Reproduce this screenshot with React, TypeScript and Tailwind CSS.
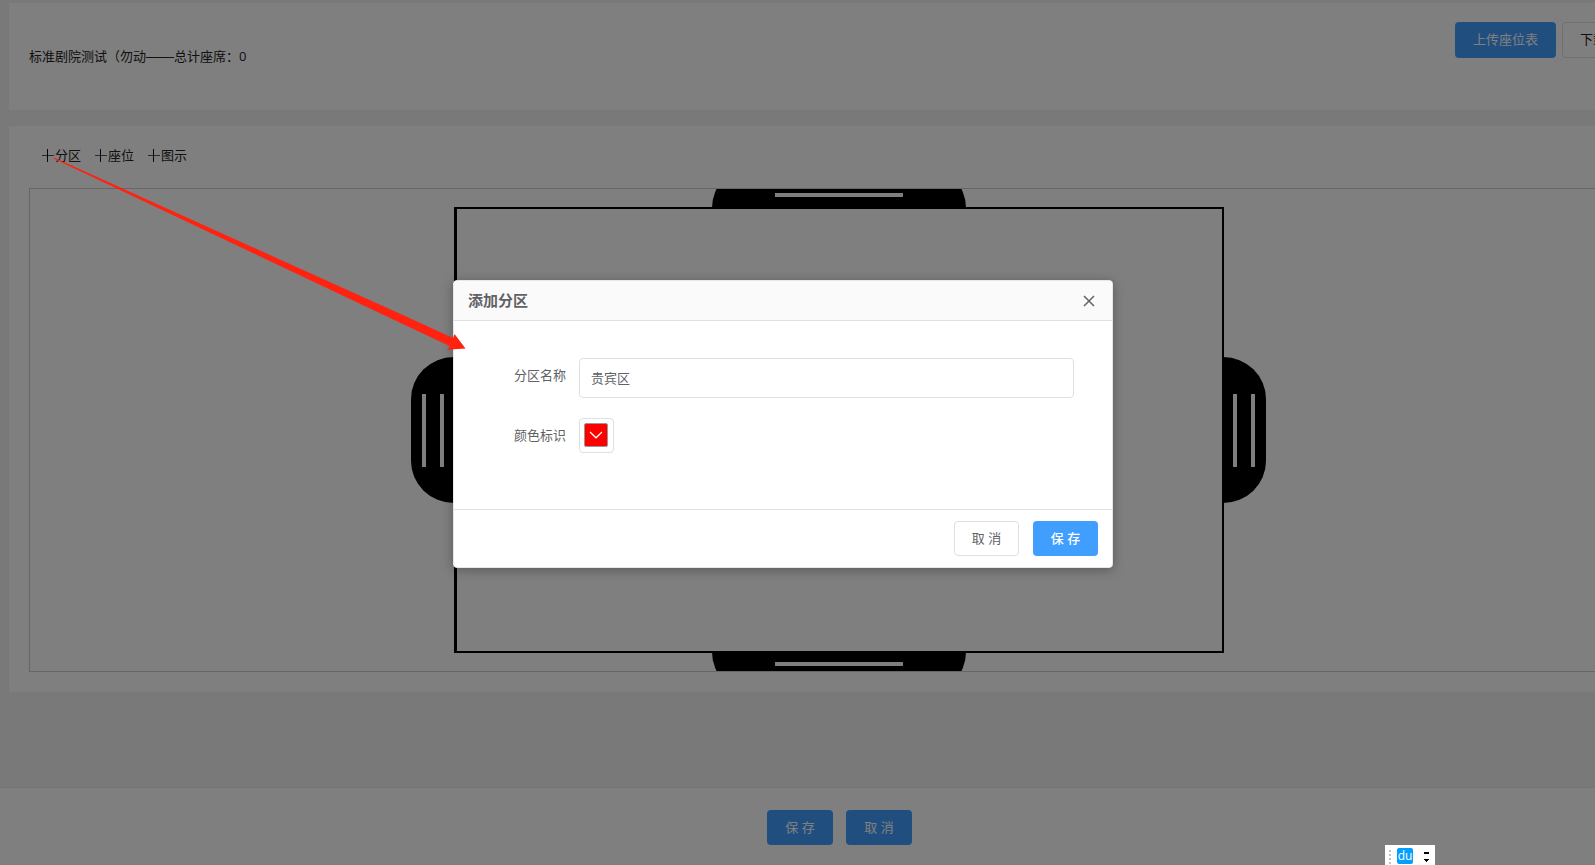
import type { ReactNode } from "react";

function Plus() {
  return (
    <svg viewBox="0 0 13 13" className="h-[13px] w-[13px]" fill="none" shapeRendering="crispEdges">
      <path d="M0.5 6.5H12.5" stroke="#555" />
      <path d="M6.5 0V13" stroke="#111" />
    </svg>
  );
}

function ToolButton({ children }: { children: ReactNode }) {
  return (
    <button type="button" className="flex items-center gap-px whitespace-nowrap leading-[18px]">
      <Plus />
      {children}
    </button>
  );
}

function VenuePlan() {
  return (
    <svg viewBox="411 189 856 482" className="block h-[482px] w-[856px] shrink-0">
      <path d="M454 357A43 42 0 0 0 411 399V461A43 42 0 0 0 454 503Z" fill="#000" />
      <path d="M1223 357A43 42 0 0 1 1266 399V461A43 42 0 0 1 1223 503Z" fill="#000" />
      <path d="M712 208A42 42 0 0 1 754 166H924A42 42 0 0 1 966 208Z" fill="#000" />
      <path d="M712 652A42 42 0 0 0 754 694H924A42 42 0 0 0 966 652Z" fill="#000" />
      <g fill="#fff">
        <path d="M422 394h4v73h-4zM440 394h4v73h-4z" />
        <path d="M1233 394h4v73h-4zM1251 394h4v73h-4z" />
        <path d="M775 193h128v4H775zM775 662h128v4H775z" />
      </g>
      <path d="M454 207H1224V653H454ZM457 209V651H1222V209Z" fill="#000" fillRule="evenodd" />
    </svg>
  );
}

function Arrow() {
  return (
    <svg
      viewBox="0 0 480 360"
      className="pointer-events-none absolute left-0 top-0 z-30 h-[360px] w-[480px]"
      aria-hidden="true"
    >
      <path d="M54 157.4L400 313.8L453 338L454.5 334L465.5 348.6L447.2 349.8L450 346.2L398 321.8L54 158.8Z" fill="#ff2211" />
    </svg>
  );
}

function InputBar() {
  return (
    <div className="absolute bottom-0 right-[160px] z-30 flex h-5 w-[50px] items-start bg-white pt-[3px]">
      <svg viewBox="0 0 12 17" className="h-[17px] w-3" shapeRendering="crispEdges">
        <path d="M4 -2h2v2h-2zM4 2h2v2h-2zM4 6h2v2h-2zM4 10h2v2h-2zM4 14h2v2h-2z" fill="#c4c4c4" />
      </svg>
      <span className="flex h-4 w-4 items-center justify-center rounded-[2px] bg-[#049ffd] text-[12px] leading-4 text-white">
        du
      </span>
      <svg viewBox="0 0 22 17" className="h-[17px] w-[22px]" shapeRendering="crispEdges">
        <path d="M11 4h5v2h-5zM11 11h5v1h-1v1h-1v1h-1v-1h-1v-1h-1z" fill="#000" />
      </svg>
    </div>
  );
}

function Dialog() {
  return (
    <div className="absolute inset-0 z-20 flex items-start justify-center bg-black/50 pr-[29px] pt-[280px]">
      <div
        role="dialog"
        aria-labelledby="dialog-title"
        className="w-[660px] overflow-hidden rounded-[4px] border border-[#e4e7ed] bg-white text-[#606266] shadow-[0_2px_12px_rgba(0,0,0,0.3)]"
      >
        <header className="flex h-10 items-center justify-between border-b border-[#dcdfe6] bg-[#fafafa] pl-[14px] pr-[17px]">
          <h2 id="dialog-title" className="pb-0.5 text-[15px] font-bold leading-5">
            添加分区
          </h2>
          <button type="button" aria-label="关闭" className="flex h-3 w-3 items-center justify-center">
            <svg viewBox="0 0 12 12" className="h-3 w-3" fill="none" stroke="#606266" strokeWidth="1.5">
              <path d="M1 1L11 11M11 1L1 11" />
            </svg>
          </button>
        </header>
        <form className="grid h-[188px] grid-cols-[112px_1fr] content-start gap-x-[13px] gap-y-5 pr-[38px] pt-[37px]">
          <label htmlFor="zone-name" className="text-right leading-[34px]">
            分区名称
          </label>
          <input
            id="zone-name"
            defaultValue="贵宾区"
            className="h-10 w-full rounded-[4px] border border-[#dcdfe6] px-[11px] pb-0.5 outline-none"
          />
          <span id="zone-color" className="text-right leading-[34px]">
            颜色标识
          </span>
          <button
            type="button"
            aria-labelledby="zone-color"
            className="h-[35px] w-[35px] rounded-[4px] border border-[#dcdfe6] pb-[5px] pl-1 pr-[5px] pt-1"
          >
            <span className="flex h-full w-full items-center justify-center rounded-[2px] border border-[#999] bg-[#ff0000]">
              <svg viewBox="0 0 14 8" className="h-2 w-[14px]" fill="none" stroke="#fff" strokeWidth="1.2">
                <path d="M1 1L7 6.8L13 1" />
              </svg>
            </span>
          </button>
        </form>
        <footer className="flex justify-end gap-[14px] border-t border-[#dcdfe6] px-[14px] py-[11px]">
          <button type="button" className="h-[35px] w-[65px] rounded-[4px] border border-[#dcdfe6] bg-white">
            取 消
          </button>
          <button type="button" className="h-[35px] w-[65px] rounded-[4px] bg-[#409eff] font-medium text-white">
            保 存
          </button>
        </footer>
      </div>
    </div>
  );
}

export default function App() {
  return (
    <div className="relative flex min-h-screen flex-col overflow-hidden bg-[#f2f2f2] font-['Open_Sans','Noto_Sans_CJK_SC',sans-serif] text-[13px] text-[#222]">
      <main className="-mr-[74px] flex grow flex-col gap-4 pl-[9px] pt-[3px]">
        <section className="flex h-[107px] items-center justify-between bg-white pb-0.5 pl-5 pr-[6px]">
          <p className="leading-5">
            标准剧院测试（勿动
            <span className="font-['Liberation_Sans',sans-serif] text-sm leading-5">——</span>
            总计座席：0
          </p>
          <div className="flex gap-[6px] self-start pt-[19px]">
            <button type="button" className="h-9 w-[101px] rounded-[4px] bg-[#409eff] text-white">
              上传座位表
            </button>
            <button type="button" className="h-9 w-[101px] rounded-[4px] border border-[#dcdfe6] bg-white">
              下载座位表
            </button>
          </div>
        </section>
        <section className="bg-white p-5">
          <div className="flex h-[42px] items-start gap-[13px] pl-3">
            <ToolButton>分区</ToolButton>
            <ToolButton>座位</ToolButton>
            <ToolButton>图示</ToolButton>
          </div>
          <div className="flex justify-center overflow-hidden border border-[#ccc]">
            <VenuePlan />
          </div>
        </section>
      </main>
      <div className="-mr-[84px] flex h-[78px] justify-center gap-[13px] border-t border-[#ebebeb] bg-white pt-[22px]">
        <button type="button" className="h-[35px] w-[66px] rounded-[4px] bg-[#409eff] text-white">
          保 存
        </button>
        <button type="button" className="h-[35px] w-[66px] rounded-[4px] bg-[#409eff] text-white">
          取 消
        </button>
      </div>
      <Dialog />
      <Arrow />
      <InputBar />
    </div>
  );
}
